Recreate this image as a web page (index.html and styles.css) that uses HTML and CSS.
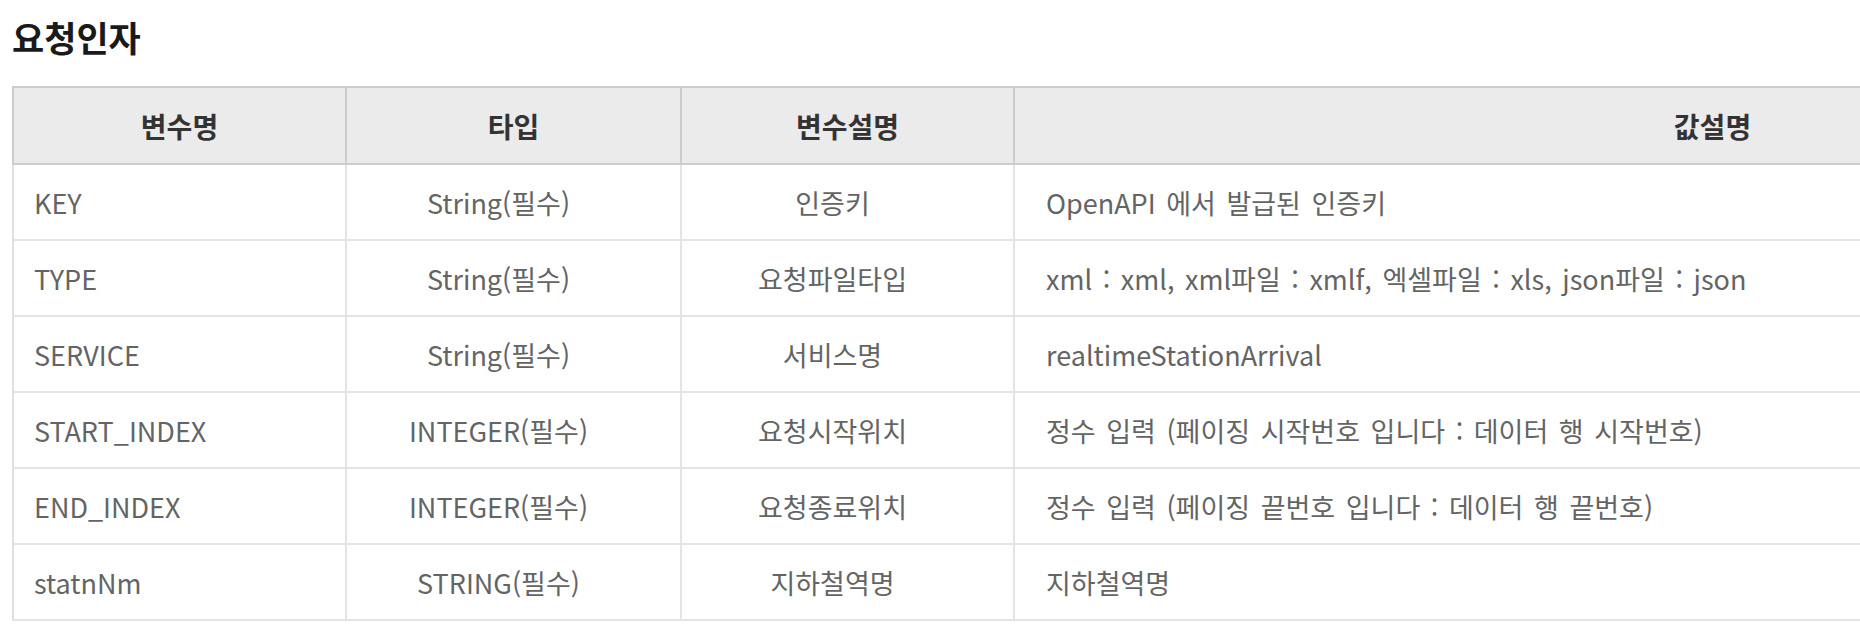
FILE: index.html
```html
<!DOCTYPE html>
<html lang="ko">
<head>
<meta charset="utf-8">
<title>요청인자</title>
<link rel="stylesheet" href="styles.css">
</head>
<body>
<div class="page">
  <h2 class="title">요청인자</h2>
  <div class="table-wrap">
    <table class="params">
      <thead>
        <tr>
          <th class="c1">변수명</th>
          <th class="c2">타입</th>
          <th class="c3">변수설명</th>
          <th class="c4">값설명</th>
        </tr>
      </thead>
      <tbody>
        <tr>
          <td class="name">KEY</td>
          <td class="mid">String(필수)</td>
          <td class="mid">인증키</td>
          <td class="desc">OpenAPI 에서 발급된 인증키</td>
        </tr>
        <tr>
          <td class="name">TYPE</td>
          <td class="mid">String(필수)</td>
          <td class="mid">요청파일타입</td>
          <td class="desc">xml : xml, xml파일 : xmlf, 엑셀파일 : xls, json파일 : json</td>
        </tr>
        <tr>
          <td class="name">SERVICE</td>
          <td class="mid">String(필수)</td>
          <td class="mid">서비스명</td>
          <td class="desc">realtimeStationArrival</td>
        </tr>
        <tr>
          <td class="name">START_INDEX</td>
          <td class="mid">INTEGER(필수)</td>
          <td class="mid">요청시작위치</td>
          <td class="desc">정수 입력 (페이징 시작번호 입니다 : 데이터 행 시작번호)</td>
        </tr>
        <tr>
          <td class="name">END_INDEX</td>
          <td class="mid">INTEGER(필수)</td>
          <td class="mid">요청종료위치</td>
          <td class="desc">정수 입력 (페이징 끝번호 입니다 : 데이터 행 끝번호)</td>
        </tr>
        <tr>
          <td class="name">statnNm</td>
          <td class="mid">STRING(필수)</td>
          <td class="mid">지하철역명</td>
          <td class="desc">지하철역명</td>
        </tr>
      </tbody>
    </table>
  </div>
</div>
</body>
</html>
```

FILE: styles.css
```css
html, body {
  margin: 0;
  padding: 0;
  background: #ffffff;
  overflow: hidden;
}

.page {
  padding: 19px 0 0 12px;
  font-family: "Noto Sans CJK KR", sans-serif;
}

.title {
  margin: 0 0 32px 0;
  font-size: 35px;
  line-height: 35px;
  font-weight: 700;
  color: #1a1a1a;
}

.table-wrap {
  overflow: hidden;
}

.params {
  border-collapse: separate;
  border-spacing: 0;
  table-layout: fixed;
  width: 2400px;
}

.params th,
.params td {
  box-sizing: border-box;
  vertical-align: middle;
  padding: 0;
}

.params th {
  height: 79px;
  background: #ebebeb;
  border-top: 2px solid #cccccc;
  border-bottom: 2px solid #cccccc;
  border-right: 2px solid #cccccc;
  font-size: 28px;
  font-weight: 700;
  color: #333333;
  text-align: center;
}

.params th.c1 {
  border-left: 2px solid #cccccc;
  width: 335px;
}
.params th.c2 { width: 335px; }
.params th.c3 { width: 333px; }
.params th.c4 { width: 1397px; }

.params td {
  height: 76px;
  border-bottom: 2px solid #e4e4e4;
  border-right: 2px solid #e4e4e4;
  font-size: 27px;
  font-weight: 400;
  color: #646464;
  white-space: nowrap;
}

.params td.name {
  border-left: 2px solid #e0e0e0;
  padding-left: 20px;
  text-align: left;
}

.params td.mid {
  padding: 0 50px 0 20px;
  text-align: center;
}

.params td.desc {
  padding-left: 31px;
  text-align: left;
  word-spacing: 3px;
}
```
